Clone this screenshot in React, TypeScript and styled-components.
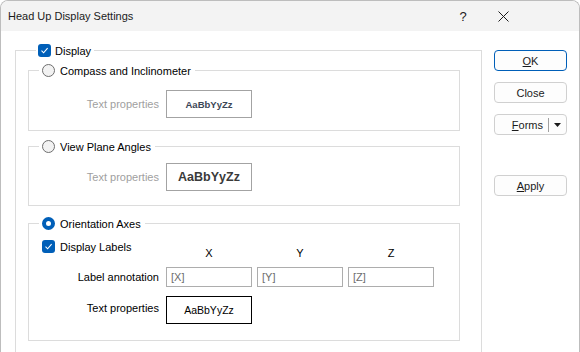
import React from "react";
import styled, { createGlobalStyle } from "styled-components";

const GlobalStyle = createGlobalStyle`
  html, body {
    margin: 0;
    padding: 0;
    height: 100%;
    overflow: hidden;
    background: #ffffff;
  }
  body {
    font-family: "Liberation Sans", Arial, sans-serif;
    font-size: 11px;
    color: #000;
  }
  * {
    box-sizing: border-box;
  }
`;

function CheckMark() {
  return (
    <svg width="9" height="9" viewBox="0 0 9 9">
      <path d="M1.5 4.7 L3.6 6.8 L7.6 2.2" fill="none" stroke="#fff" strokeWidth="1.1" />
    </svg>
  );
}

function CloseGlyph() {
  return (
    <svg width="11" height="11" viewBox="0 0 11 11">
      <path d="M0.5 0.5 L10.5 10.5 M10.5 0.5 L0.5 10.5" stroke="#1b1b1b" strokeWidth="1" />
    </svg>
  );
}

function DropArrow() {
  return (
    <svg width="7" height="4" viewBox="0 0 7 4">
      <polygon points="0,0 7,0 3.5,4" fill="#1b1b1b" />
    </svg>
  );
}

export default function App() {
  return (
    <>
      <GlobalStyle />
      <Window>
        <TitleBar>
          <Title>Head Up Display Settings</Title>
          <Caption>
            <CaptionButton>?</CaptionButton>
            <CaptionButton>
              <CloseGlyph />
            </CaptionButton>
          </Caption>
        </TitleBar>

        <Body>
          <OuterGroup>
            <Legend $ml={8} $px={2}>
              <LegendInner $gap={4}>
                <CheckBox>
                  <CheckMark />
                </CheckBox>
                Display
              </LegendInner>
            </Legend>

            <Group $mt={0} $pt={12} $pb={12}>
              <Legend $ml={10} $px={3}>
                <LegendInner $gap={5}>
                  <Radio />
                  Compass and Inclinometer
                </LegendInner>
              </Legend>
              <FieldRow>
                <FieldLabel $disabled>Text properties</FieldLabel>
                <FontBox $variant="small">AaBbYyZz</FontBox>
              </FieldRow>
            </Group>

            <Group $mt={8} $pt={9} $pb={14}>
              <Legend $ml={10} $px={3}>
                <LegendInner $gap={5}>
                  <Radio />
                  View Plane Angles
                </LegendInner>
              </Legend>
              <FieldRow>
                <FieldLabel $disabled>Text properties</FieldLabel>
                <FontBox $variant="large">AaBbYyZz</FontBox>
              </FieldRow>
            </Group>

            <Group $mt={10} $pt={9} $pb={16}>
              <Legend $ml={10} $px={3}>
                <LegendInner $gap={5}>
                  <Radio $checked />
                  Orientation Axes
                </LegendInner>
              </Legend>
              <AxesGrid>
                <LabelsToggle>
                  <CheckBox>
                    <CheckMark />
                  </CheckBox>
                  Display Labels
                </LabelsToggle>
                <AxisHead>X</AxisHead>
                <AxisHead>Y</AxisHead>
                <AxisHead>Z</AxisHead>

                <FieldLabel>Label annotation</FieldLabel>
                <AxisInput defaultValue="[X]" />
                <AxisInput defaultValue="[Y]" />
                <AxisInput defaultValue="[Z]" />

                <FieldLabel>Text properties</FieldLabel>
                <FontBox $variant="normal">AaBbYyZz</FontBox>
              </AxesGrid>
            </Group>
          </OuterGroup>

          <ButtonColumn>
            <Button $primary>
              <u>O</u>K
            </Button>
            <Button>Close</Button>
            <SplitButton>
              <span>
                <u>F</u>orms
              </span>
              <SplitDivider />
              <DropArrow />
            </SplitButton>
            <Button $spaced>
              <u>A</u>pply
            </Button>
          </ButtonColumn>
        </Body>
      </Window>
    </>
  );
}

const Window = styled.div`
  width: 580px;
  height: 100vh;
  border: 1px solid #bdbdbd;
  border-bottom: none;
  border-radius: 8px 8px 0 0;
  overflow: hidden;
  background: #ffffff;
  display: flex;
  flex-direction: column;
`;

const TitleBar = styled.div`
  height: 30px;
  flex: none;
  display: flex;
  align-items: center;
  padding-left: 7px;
  background: #f3f3f3;
`;

const Title = styled.div`
  font-size: 11px;
  color: #1b1b1b;
`;

const Caption = styled.div`
  margin-left: auto;
  display: flex;
  padding-right: 56px;
`;

const CaptionButton = styled.div`
  width: 40px;
  height: 30px;
  display: flex;
  align-items: center;
  justify-content: center;
  font-size: 13px;
  color: #1b1b1b;
`;

const Body = styled.div`
  display: flex;
  align-items: flex-start;
  padding: 12px 0 0 14px;
`;

const OuterGroup = styled.fieldset`
  margin: 0;
  min-width: 0;
  width: 467px;
  border: 1px solid #dcdcdc;
  padding: 5px 21px 14px 12px;
`;

const Group = styled.fieldset<{ $mt: number; $pt: number; $pb: number }>`
  margin: ${(p) => p.$mt}px 0 0 0;
  min-width: 0;
  border: 1px solid #dcdcdc;
  padding: ${(p) => p.$pt}px 0 ${(p) => p.$pb}px 0;
`;

const Legend = styled.legend<{ $ml: number; $px: number }>`
  margin-left: ${(p) => p.$ml}px;
  padding: 0 ${(p) => p.$px}px;
  height: 15px;
`;

const LegendInner = styled.span<{ $gap: number }>`
  display: flex;
  align-items: center;
  gap: ${(p) => p.$gap}px;
  height: 15px;
  padding-right: 1px;
`;

const CheckBox = styled.span`
  width: 13px;
  height: 13px;
  flex: none;
  border-radius: 3px;
  background: #005fb8;
  display: flex;
  align-items: center;
  justify-content: center;
`;

const Radio = styled.span<{ $checked?: boolean }>`
  width: 13px;
  height: 13px;
  flex: none;
  border-radius: 50%;
  border: ${(p) => (p.$checked ? "4px solid #005fb8" : "1px solid #6e6e6e")};
  background: ${(p) => (p.$checked ? "#ffffff" : "#f2f2f2")};
`;

const FieldRow = styled.div`
  display: flex;
  align-items: center;
  gap: 5px;
`;

const FieldLabel = styled.div<{ $disabled?: boolean }>`
  width: 132px;
  padding-right: 2px;
  text-align: right;
  color: ${(p) => (p.$disabled ? "#a0a0a0" : "#000")};
  align-self: center;
`;

const FontBox = styled.div<{ $variant: "small" | "large" | "normal" }>`
  width: 86px;
  height: 28px;
  display: flex;
  align-items: center;
  justify-content: center;
  border: 1px solid ${(p) => (p.$variant === "normal" ? "#000" : "#a3a3a3")};
  font-weight: ${(p) => (p.$variant === "normal" ? 400 : 700)};
  font-size: ${(p) =>
    p.$variant === "small" ? "9.5px" : p.$variant === "large" ? "12.5px" : "10.5px"};
  color: ${(p) =>
    p.$variant === "small" ? "#3b4656" : p.$variant === "large" ? "#3a3a3a" : "#000"};
  align-self: end;
`;

const AxesGrid = styled.div`
  display: grid;
  grid-template-columns: 132px 86px 86px 86px;
  grid-template-rows: 22px 20px 32px;
  column-gap: 5px;
  row-gap: 5px;
`;

const LabelsToggle = styled.div`
  display: flex;
  align-items: center;
  gap: 5px;
  height: 13px;
  padding-left: 13px;
  align-self: start;
  white-space: nowrap;
`;

const AxisHead = styled.div`
  text-align: center;
  align-self: end;
  line-height: 13px;
  margin-bottom: 2px;
`;

const AxisInput = styled.input`
  width: 86px;
  height: 20px;
  margin: 0;
  border: 1px solid #adadad;
  padding: 0 4px;
  font-family: "Liberation Sans", Arial, sans-serif;
  font-size: 11px;
  color: #6d6d6d;
  background: #fff;
  outline: none;
`;

const ButtonColumn = styled.div`
  margin-left: 12px;
  padding-top: 7px;
  display: flex;
  flex-direction: column;
  gap: 11px;
`;

const Button = styled.div<{ $primary?: boolean; $spaced?: boolean }>`
  width: 73px;
  height: 21px;
  display: flex;
  align-items: center;
  justify-content: center;
  border: 1px solid ${(p) => (p.$primary ? "#005fb8" : "#d0d0d0")};
  border-radius: 4px;
  background: #fdfdfd;
  color: #1b1b1b;
  margin-top: ${(p) => (p.$spaced ? "29px" : "0")};

  u {
    text-underline-offset: 1px;
  }
`;

const SplitButton = styled(Button)`
  justify-content: flex-end;
  padding-right: 5px;
`;

const SplitDivider = styled.span`
  width: 1px;
  height: 14px;
  background: #a0a0a0;
  margin: 0 5px 0 5px;
`;
